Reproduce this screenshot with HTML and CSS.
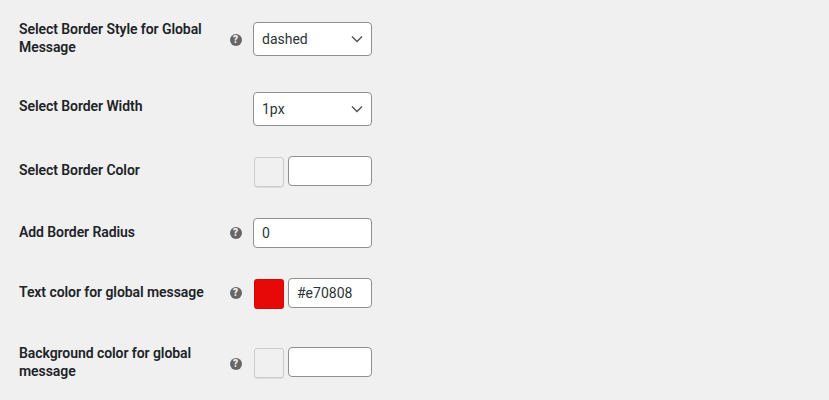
FILE: index.html
```html
<!DOCTYPE html>
<html lang="en">
<head>
    <meta charset="UTF-8">
    <title>Global Message Settings</title>
    <link rel="stylesheet" href="styles.css">
</head>
<body>
    <div class="settings">
        <div class="row row-tall">
            <label class="row-label" for="borderStyle">Select Border Style for Global Message</label>
            <span class="help">?</span>
            <select id="borderStyle" class="field">
                <option>dashed</option>
            </select>
        </div>
        <div class="row row-after-tall">
            <label class="row-label" for="borderWidth">Select Border Width</label>
            <span></span>
            <select id="borderWidth" class="field">
                <option>1px</option>
            </select>
        </div>
        <div class="row">
            <label class="row-label">Select Border Color</label>
            <span></span>
            <div class="color-picker">
                <span class="swatch"></span>
                <input type="text" class="field color-value" value="">
            </div>
        </div>
        <div class="row row-after-color">
            <label class="row-label" for="borderRadius">Add Border Radius</label>
            <span class="help">?</span>
            <input type="text" id="borderRadius" class="field" value="0">
        </div>
        <div class="row">
            <label class="row-label">Text color for global message</label>
            <span class="help">?</span>
            <div class="color-picker">
                <span class="swatch swatch-red"></span>
                <input type="text" class="field color-value" value="#e70808">
            </div>
        </div>
        <div class="row row-tall row-last">
            <label class="row-label">Background color for global message</label>
            <span class="help">?</span>
            <div class="color-picker">
                <span class="swatch"></span>
                <input type="text" class="field color-value" value="">
            </div>
        </div>
    </div>
</body>
</html>
```

FILE: styles.css
```css
body {
    margin: 0;
    background: #f0f0f1;
    font-family: Roboto, "Liberation Sans", sans-serif;
    font-size: 14px;
    color: #1d2327;
}
.settings {
    padding: 20px 0 0 19px;
}
.row {
    display: grid;
    grid-template-columns: 204px 30px 119px;
    align-items: start;
    margin-bottom: 30px;
}
.row-tall {
    align-items: center;
    margin-bottom: 36px;
}
.row-after-color {
    margin-top: 31px;
}
.row-last {
    margin-top: 35px;
}
.row-label {
    font-weight: 600;
    letter-spacing: -0.07px;
    line-height: 18px;
    padding-top: 5px;
}
.row-tall .row-label {
    padding-top: 0;
}
.help {
    width: 12px;
    height: 12px;
    margin: 9px 0 0 6.5px;
    border-radius: 50%;
    background: #666;
    color: #f0f0f1;
    font-size: 10px;
    font-weight: 900;
    line-height: 12px;
    text-align: center;
}
.row-tall .help {
    margin-top: 3px;
}
.field {
    box-sizing: border-box;
    width: 100%;
    height: 30px;
    margin: 0;
    padding: 0 8px;
    border: 1px solid #8c8f94;
    border-radius: 4px;
    background: #fff;
    color: #2c3338;
    font-family: inherit;
    font-size: 14px;
}
select.field {
    height: 34px;
    appearance: none;
    background: #fff url("data:image/svg+xml,%3Csvg xmlns='http://www.w3.org/2000/svg' width='12' height='8' viewBox='0 0 12 8'%3E%3Cpath d='M1 1.5l5 5 5-5' fill='none' stroke='%23555' stroke-width='1.5'/%3E%3C/svg%3E") no-repeat right 8px center;
}
.row-tall select.field {
    margin-top: 2px;
}
.color-picker {
    display: flex;
    gap: 4px;
    padding-left: 1px;
}
.swatch {
    box-sizing: border-box;
    flex: none;
    width: 30px;
    height: 30px;
    margin-top: 1px;
    border: 1px solid #ccc;
    border-radius: 3px;
    background: #f0f0f1;
    box-shadow: 0 1px 0 #ddd;
}
.swatch-red {
    border-color: rgba(0, 0, 0, 0.08);
    background: #e70808;
    box-shadow: none;
}
.color-value {
    flex: 1;
    min-width: 0;
}
```
